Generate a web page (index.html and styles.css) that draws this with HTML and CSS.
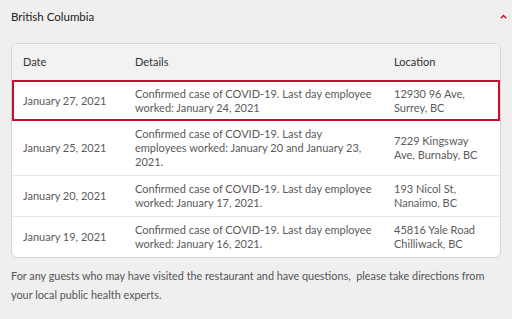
FILE: index.html
```html
<!DOCTYPE html>
<html>
<head>
<meta charset="utf-8">
<link rel="stylesheet" href="styles.css">
</head>
<body>
<div class="page">
  <div class="acc-head">
    <span class="acc-title">British Columbia</span>
    <svg class="chev" width="7" height="5" viewBox="0 0 7 5"><path d="M0.8 4.2 L3.5 1.4 L6.2 4.2" fill="none" stroke="#c8102e" stroke-width="1.4"/></svg>
  </div>
  <div class="card">
    <div class="row head">
      <div class="c1">Date</div><div class="c2">Details</div><div class="c3">Location</div>
    </div>
    <div class="row hl">
      <div class="c1">January 27, 2021</div>
      <div class="c2">Confirmed case of COVID-19. Last day employee worked: January 24, 2021</div>
      <div class="c3">12930 96 Ave, Surrey, BC</div>
    </div>
    <div class="row">
      <div class="c1">January 25, 2021</div>
      <div class="c2">Confirmed case of COVID-19. Last day employees worked: January 20 and January 23, 2021.</div>
      <div class="c3">7229 Kingsway Ave, Burnaby, BC</div>
    </div>
    <div class="row">
      <div class="c1">January 20, 2021</div>
      <div class="c2">Confirmed case of COVID-19. Last day employee worked: January 17, 2021.</div>
      <div class="c3">193 Nicol St, Nanaimo, BC</div>
    </div>
    <div class="row last">
      <div class="c1">January 19, 2021</div>
      <div class="c2">Confirmed case of COVID-19. Last day employee worked: January 16, 2021.</div>
      <div class="c3">45816 Yale Road Chilliwack, BC</div>
    </div>
  </div>
  <p class="note">For any guests who may have visited the restaurant and have questions,&nbsp; please take directions from your local public health experts.</p>
</div>
</body>
</html>
```
FILE: styles.css
```css
html, body { margin: 0; padding: 0; }
body {
  background: #efefef;
  font-family: Lato, sans-serif;
  color: #555;
  width: 512px;
  height: 319px;
  overflow: hidden;
}
.page { padding: 0 11px 0 11px; }
.acc-head {
  display: flex;
  align-items: center;
  justify-content: space-between;
  height: 33px;
  margin-right: -6px;
}
.acc-title { font-size: 11.5px; color: #222; }
.card {
  margin-top: 10px;
  border: 1px solid #d4d4d4;
  border-radius: 6px;
  background: #fff;
  overflow: hidden;
}
.row {
  display: grid;
  grid-template-columns: 112px 259px 1fr;
  align-items: center;
  padding: 0 0 0 11px;
  border-top: 1px solid #e6e6e6;
  font-size: 11px;
  line-height: 14px;
  color: #5a5a5a;
  min-height: 41px;
  box-sizing: border-box;
}
.row.head {
  border-top: none;
  background: #f2f2f2;
  color: #333;
  min-height: 36px;
}
.row.hl {
  border: 2px solid #c8102e;
  padding-left: 9px;
}
.row.hl + .row { border-top: none; min-height: 54px; }
.c2 { padding-right: 18px; }
.c3 { padding-right: 10px; }
.note {
  margin: 8px 0 0 0;
  font-size: 10.85px;
  line-height: 19px;
  color: #555;
}
```
